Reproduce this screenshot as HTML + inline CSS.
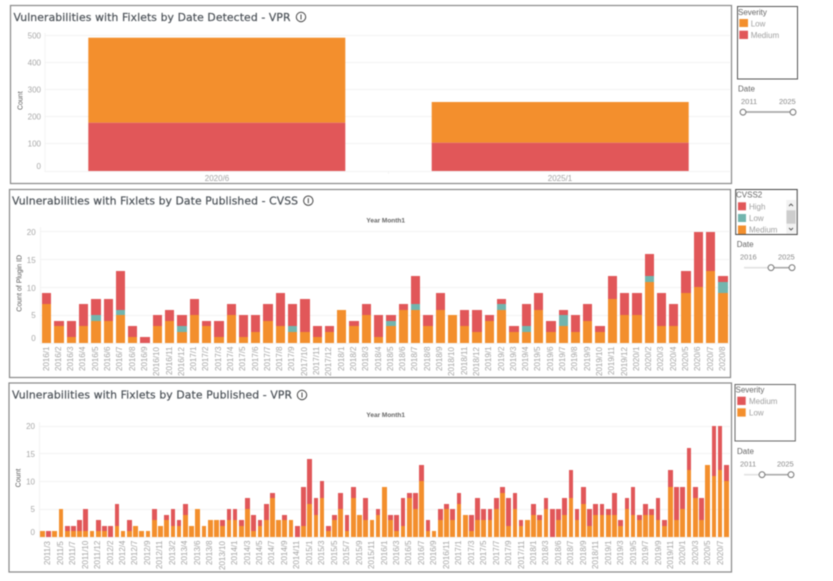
<!DOCTYPE html>
<html><head><meta charset="utf-8"><style>
html,body{margin:0;padding:0;background:#fff}
#p{position:relative;width:833px;height:581px;overflow:hidden;background:#fff;filter:blur(.45px);font-family:"Liberation Sans",sans-serif}
svg{position:absolute;left:0;top:0}
.bars{position:absolute;display:flex;align-items:flex-end}
.bars b{display:flex;flex-direction:column;flex:none}
.bars u,.bars s,.bars i{display:block}
.c2 b{width:12.31px}.c2 u,.c2 s,.c2 i{width:9.3px;margin-left:1.5px}
.c3 b{width:6.23px}.c3 u,.c3 i{width:4.7px;margin-left:.76px}
u{background:#e15759}s{background:#72b5ae}i{background:#f38f2d}
.h1{height:5.56px}.h2{height:11.12px}.h3{height:16.68px}.h4{height:22.24px}.h5{height:27.8px}.h6{height:33.36px}.h7{height:38.92px}.h8{height:44.48px}.h9{height:50.04px}.h10{height:55.6px}.h11{height:61.16px}.h12{height:66.72px}.h13{height:72.28px}
.lab{position:absolute;display:flex;color:#a3a3a3;font-size:8px}
.lab span{display:block;flex:none;height:30px;writing-mode:vertical-rl;transform:rotate(180deg);text-align:end;white-space:nowrap}
.l2 span{width:12.31px;line-height:12.31px}
.l3 span{width:12.46px;line-height:12.46px}
text{font-family:"Liberation Sans",sans-serif}
.t{font-family:"DejaVu Sans",sans-serif;font-size:10.8px;fill:#4b5157;stroke:#4b5157;stroke-width:.2px}
.ax{font-size:8px;fill:#a3a3a3}
.ar{font-size:8px;fill:#a8a8a8;text-anchor:end}
.yl{font-size:7px;fill:#555;text-anchor:middle}
.ym{font-size:6.5px;fill:#666;font-weight:bold;text-anchor:middle}
.lg{font-size:8px;fill:#666}
.li{font-size:8px;fill:#a0a0a0}
.sv{font-size:7.5px;fill:#888}
.f{fill:none;stroke:#888;stroke-width:1.2}
.g{stroke:#f3f3f3;stroke-width:1}
.h{fill:#fff;stroke:#777;stroke-width:1}
</style></head><body><div id="p">
<svg width="833" height="581" viewBox="0 0 833 581">
<rect class="f" x="10.5" y="5.5" width="721" height="178"/>
<rect class="f" x="9.5" y="189.5" width="721" height="188"/>
<rect class="f" x="9" y="383" width="722.5" height="189"/>
<g class="g">
<line x1="45" x2="731" y1="35.5" y2="35.5"/><line x1="45" x2="731" y1="62.5" y2="62.5"/><line x1="45" x2="731" y1="89.5" y2="89.5"/><line x1="45" x2="731" y1="116.5" y2="116.5"/><line x1="45" x2="731" y1="143.5" y2="143.5"/><line x1="45" x2="731" y1="171.5" y2="171.5"/>
<line x1="45" x2="45" y1="33" y2="172"/><line x1="388.5" x2="388.5" y1="171" y2="174"/>
<line x1="41" x2="730" y1="231.5" y2="231.5"/><line x1="41" x2="730" y1="259.5" y2="259.5"/><line x1="41" x2="730" y1="287.5" y2="287.5"/><line x1="41" x2="730" y1="315.5" y2="315.5"/><line x1="41" x2="730" y1="343.5" y2="343.5"/>
<line x1="40.5" x2="40.5" y1="227" y2="344"/>
<line x1="39" x2="731" y1="426.5" y2="426.5"/><line x1="39" x2="731" y1="453.5" y2="453.5"/><line x1="39" x2="731" y1="481.5" y2="481.5"/><line x1="39" x2="731" y1="509.5" y2="509.5"/><line x1="39" x2="731" y1="537.5" y2="537.5"/>
<line x1="39.5" x2="39.5" y1="422" y2="538"/>
</g>
<rect x="88.3" y="37.7" width="257" height="85" fill="#f38f2d"/>
<rect x="88.3" y="122.7" width="257" height="48.3" fill="#e15759"/>
<rect x="431.7" y="102" width="257" height="40.7" fill="#f38f2d"/>
<rect x="431.7" y="142.7" width="257" height="28.3" fill="#e15759"/>

<text class="t" x="13.5" y="21" textLength="277" lengthAdjust="spacing">Vulnerabilities with Fixlets by Date Detected - VPR</text>
<text class="t" x="12" y="204.7" textLength="286" lengthAdjust="spacing">Vulnerabilities with Fixlets by Date Published - CVSS</text>
<text class="t" x="12" y="398.7" textLength="280" lengthAdjust="spacing">Vulnerabilities with Fixlets by Date Published - VPR</text>
<g fill="none" stroke="#444" stroke-width="1">
<circle cx="301" cy="17" r="4.7"/><path d="M301 14.5v5"/>
<circle cx="308.3" cy="200.7" r="4.7"/><path d="M308.3 198.2v5"/>
<circle cx="302" cy="395" r="4.7"/><path d="M302 392.5v5"/>
</g>
<text class="ym" x="385.7" y="222.5">Year Month1</text>
<text class="ym" x="385.7" y="417">Year Month1</text>

<text class="ar" x="41" y="38.5">500</text><text class="ar" x="41" y="65.5">400</text><text class="ar" x="41" y="92.5">300</text><text class="ar" x="41" y="119.5">200</text><text class="ar" x="41" y="146.5">100</text><text class="ar" x="41" y="169">0</text>
<text class="yl" transform="translate(22.5,100.7) rotate(-90)">Count</text>
<text class="ax" x="217" y="181" text-anchor="middle">2020/6</text>
<text class="ax" x="560" y="181" text-anchor="middle">2025/1</text>

<text class="ar" x="35.7" y="235">20</text><text class="ar" x="35.7" y="263">15</text><text class="ar" x="35.7" y="291">10</text><text class="ar" x="35.7" y="318">5</text><text class="ar" x="35.7" y="341">0</text>
<text class="yl" transform="translate(21.5,283.3) rotate(-90)">Count of Plugin ID</text>

<text class="ar" x="35" y="429">20</text><text class="ar" x="35" y="457">15</text><text class="ar" x="35" y="484.5">10</text><text class="ar" x="35" y="512">5</text><text class="ar" x="35" y="535">0</text>
<text class="yl" transform="translate(20.5,478) rotate(-90)">Count</text>

<rect x="737.5" y="6.5" width="60" height="72.5" fill="none" stroke="#555" stroke-width="1"/>
<text class="lg" x="738" y="15">Severity</text>
<rect x="739.3" y="19" width="8.7" height="8" fill="#f38f2d"/><text class="li" x="750.7" y="26.5">Low</text>
<rect x="739.3" y="30.7" width="8.7" height="8.3" fill="#e15759"/><text class="li" x="750.7" y="38">Medium</text>
<text class="lg" x="738" y="91.5">Date</text>
<text class="sv" x="741" y="104">2011</text><text class="sv" x="779" y="104">2025</text>
<line x1="743" x2="793" y1="112" y2="112" stroke="#aaa" stroke-width="1.7"/>
<circle class="h" cx="743" cy="112.2" r="2.9"/><circle class="h" cx="793" cy="112.2" r="2.9"/>

<rect x="735.7" y="189.5" width="61.5" height="45" fill="none" stroke="#444" stroke-width="1"/>
<text class="lg" x="736" y="197.5">CVSS2</text>
<rect x="738" y="202.3" width="8" height="8" fill="#e15759"/><text class="li" x="749" y="209.5">High</text>
<rect x="738" y="214" width="8" height="8" fill="#72b5ae"/><text class="li" x="749" y="221">Low</text>
<rect x="738" y="225.5" width="8" height="8.5" fill="#f38f2d"/><text class="li" x="749" y="232.5">Medium</text>
<rect x="786.3" y="200" width="9.7" height="34" fill="#f2f2f2"/><rect x="786.5" y="210.3" width="9" height="13.4" fill="#cdcdcd"/>
<path d="M789 206l2-2 2 2M789 228l2 2 2-2" fill="none" stroke="#555" stroke-width=".9"/>
<text class="lg" x="736.7" y="247">Date</text>
<text class="sv" x="740" y="259.5">2016</text><text class="sv" x="778" y="259.5">2025</text>
<line x1="744" x2="771" y1="267.7" y2="267.7" stroke="#e2e2e2" stroke-width="1.7"/>
<line x1="771" x2="792" y1="267.7" y2="267.7" stroke="#aaa" stroke-width="1.7"/>
<circle class="h" cx="771" cy="267.7" r="2.9"/><circle class="h" cx="792" cy="267.7" r="2.9"/>

<rect x="735" y="384.5" width="60.3" height="56.5" fill="none" stroke="#666" stroke-width="1"/>
<text class="lg" x="735.5" y="392.5">Severity</text>
<rect x="737.3" y="396.7" width="8.4" height="8.3" fill="#e15759"/><text class="li" x="749" y="404">Medium</text>
<rect x="737.3" y="408.3" width="8.4" height="8.3" fill="#f38f2d"/><text class="li" x="749" y="415.5">Low</text>
<text class="lg" x="737" y="454">Date</text>
<text class="sv" x="740" y="466.5">2011</text><text class="sv" x="777" y="466.5">2025</text>
<line x1="744" x2="762" y1="474.7" y2="474.7" stroke="#e2e2e2" stroke-width="1.7"/>
<line x1="762" x2="791" y1="474.7" y2="474.7" stroke="#aaa" stroke-width="1.7"/>
<circle class="h" cx="762" cy="474.7" r="2.9"/><circle class="h" cx="791" cy="474.7" r="2.9"/>
</svg>

<div class="bars c2" style="left:40.55px;top:223px;height:120px">
<b><u class=h2></u><i class=h7></i></b><b><u class=h1></u><i class=h3></i></b><b><u class=h3></u><i class=h1></i></b><b><u class=h4></u><i class=h3></i></b><b><u class=h3></u><s class=h1></s><i class=h4></i></b><b><u class=h4></u><i class=h4></i></b><b><u class=h7></u><s class=h1></s><i class=h5></i></b><b><u class=h2></u><i class=h1></i></b><b><u class=h1></u></b><b><u class=h2></u><i class=h3></i></b><b><u class=h2></u><i class=h4></i></b><b><u class=h2></u><s class=h1></s><i class=h2></i></b><b><u class=h3></u><i class=h5></i></b><b><u class=h1></u><i class=h3></i></b><b><u class=h3></u><i class=h1></i></b><b><u class=h2></u><i class=h5></i></b><b><u class=h4></u><i class=h1></i></b><b><u class=h3></u><i class=h2></i></b><b><u class=h3></u><i class=h4></i></b><b><u class=h6></u><i class=h3></i></b><b><u class=h4></u><s class=h1></s><i class=h2></i></b><b><u class=h6></u><i class=h2></i></b><b><u class=h2></u><i class=h1></i></b><b><u class=h1></u><i class=h2></i></b><b><i class=h6></i></b><b><u class=h1></u><i class=h3></i></b><b><u class=h2></u><i class=h5></i></b><b><u class=h4></u><i class=h1></i></b><b><u class=h1></u><s class=h1></s><i class=h3></i></b><b><u class=h1></u><i class=h6></i></b><b><u class=h5></u><s class=h1></s><i class=h6></i></b><b><u class=h2></u><i class=h3></i></b><b><u class=h3></u><i class=h6></i></b><b><i class=h5></i></b><b><u class=h3></u><i class=h3></i></b><b><u class=h4></u><i class=h2></i></b><b><u class=h1></u><i class=h4></i></b><b><u class=h1></u><s class=h1></s><i class=h6></i></b><b><u class=h1></u><i class=h2></i></b><b><u class=h4></u><s class=h1></s><i class=h2></i></b><b><u class=h3></u><i class=h6></i></b><b><u class=h2></u><i class=h2></i></b><b><u class=h1></u><s class=h2></s><i class=h3></i></b><b><u class=h3></u><i class=h2></i></b><b><u class=h3></u><i class=h4></i></b><b><u class=h1></u><i class=h2></i></b><b><u class=h4></u><i class=h8></i></b><b><u class=h4></u><i class=h5></i></b><b><u class=h4></u><i class=h5></i></b><b><u class=h4></u><s class=h1></s><i class=h11></i></b><b><u class=h6></u><i class=h3></i></b><b><u class=h4></u><i class=h3></i></b><b><u class=h4></u><i class=h9></i></b><b><u class=h10></u><i class=h10></i></b><b><u class=h7></u><i class=h13></i></b><b><u class=h1></u><s class=h2></s><i class=h9></i></b>
</div>
<div class="lab l2" style="left:40.55px;top:346.7px">
<span>2016/1</span><span>2016/2</span><span>2016/3</span><span>2016/4</span><span>2016/5</span><span>2016/6</span><span>2016/7</span><span>2016/8</span><span>2016/9</span><span>2016/10</span><span>2016/11</span><span>2016/12</span><span>2017/1</span><span>2017/2</span><span>2017/3</span><span>2017/4</span><span>2017/5</span><span>2017/6</span><span>2017/7</span><span>2017/8</span><span>2017/9</span><span>2017/10</span><span>2017/11</span><span>2017/12</span><span>2018/1</span><span>2018/2</span><span>2018/3</span><span>2018/4</span><span>2018/5</span><span>2018/6</span><span>2018/7</span><span>2018/8</span><span>2018/9</span><span>2018/10</span><span>2018/11</span><span>2018/12</span><span>2019/1</span><span>2019/2</span><span>2019/3</span><span>2019/4</span><span>2019/5</span><span>2019/6</span><span>2019/7</span><span>2019/8</span><span>2019/9</span><span>2019/10</span><span>2019/11</span><span>2019/12</span><span>2020/1</span><span>2020/2</span><span>2020/3</span><span>2020/4</span><span>2020/5</span><span>2020/6</span><span>2020/7</span><span>2020/8</span>
</div>

<div class="bars c3" style="left:39.2px;top:417px;height:120px">
<b><i class=h1></i></b><b><u class=h1></u></b><b><i class=h1></i></b><b><i class=h5></i></b><b><u class=h1></u><i class=h1></i></b><b><u class=h1></u><i class=h1></i></b><b><u class=h2></u><i class=h1></i></b><b><u class=h4></u><i class=h1></i></b><b><i class=h1></i></b><b><u class=h2></u><i class=h1></i></b><b><u class=h1></u><i class=h1></i></b><b><u class=h2></u></b><b><u class=h4></u><i class=h2></i></b><b><i class=h1></i></b><b><u class=h2></u><i class=h1></i></b><b><i class=h2></i></b><b><i class=h1></i></b><b><i class=h1></i></b><b><u class=h2></u><i class=h3></i></b><b><i class=h2></i></b><b><u class=h1></u><i class=h3></i></b><b><u class=h3></u><i class=h2></i></b><b><u class=h1></u><i class=h2></i></b><b><u class=h2></u><i class=h4></i></b><b><i class=h2></i></b><b><i class=h5></i></b><b><i class=h2></i></b><b><i class=h3></i></b><b><i class=h3></i></b><b><u class=h1></u><i class=h2></i></b><b><u class=h2></u><i class=h3></i></b><b><u class=h2></u><i class=h3></i></b><b><u class=h1></u><i class=h2></i></b><b><u class=h2></u><i class=h5></i></b><b><u class=h3></u><i class=h1></i></b><b><u class=h1></u><i class=h2></i></b><b><u class=h3></u><i class=h3></i></b><b><u class=h1></u><i class=h7></i></b><b><i class=h3></i></b><b><u class=h1></u><i class=h3></i></b><b><i class=h3></i></b><b><u class=h2></u></b><b><u class=h7></u><i class=h2></i></b><b><u class=h8></u><i class=h6></i></b><b><u class=h3></u><i class=h4></i></b><b><u class=h3></u><i class=h7></i></b><b><u class=h1></u><i class=h1></i></b><b><u class=h1></u><i class=h3></i></b><b><u class=h3></u><i class=h5></i></b><b><u class=h3></u><i class=h1></i></b><b><u class=h2></u><i class=h7></i></b><b><i class=h4></i></b><b><u class=h4></u><i class=h3></i></b><b><i class=h3></i></b><b><u class=h1></u><i class=h4></i></b><b><i class=h9></i></b><b><u class=h1></u><i class=h3></i></b><b><u class=h3></u><i class=h1></i></b><b><u class=h5></u><i class=h2></i></b><b><u class=h1></u><i class=h7></i></b><b><u class=h3></u><i class=h5></i></b><b><u class=h3></u><i class=h10></i></b><b><u class=h2></u><i class=h1></i></b><b><i class=h1></i></b><b><u class=h2></u><i class=h3></i></b><b><u class=h1></u><i class=h5></i></b><b><u class=h2></u><i class=h3></i></b><b><u class=h2></u><i class=h6></i></b><b><i class=h4></i></b><b><u class=h3></u><i class=h1></i></b><b><u class=h4></u><i class=h3></i></b><b><u class=h2></u><i class=h3></i></b><b><u class=h2></u><i class=h3></i></b><b><u class=h2></u><i class=h5></i></b><b><u class=h1></u><i class=h8></i></b><b><u class=h5></u><i class=h2></i></b><b><u class=h3></u><i class=h5></i></b><b><u class=h1></u><i class=h2></i></b><b><i class=h3></i></b><b><u class=h2></u><i class=h4></i></b><b><u class=h1></u><i class=h3></i></b><b><u class=h2></u><i class=h5></i></b><b><u class=h5></u></b><b><u class=h2></u><i class=h3></i></b><b><u class=h3></u><i class=h4></i></b><b><u class=h5></u><i class=h7></i></b><b><u class=h2></u><i class=h3></i></b><b><u class=h3></u><i class=h6></i></b><b><u class=h3></u><i class=h2></i></b><b><u class=h2></u><i class=h4></i></b><b><u class=h2></u><i class=h4></i></b><b><u class=h1></u><i class=h4></i></b><b><u class=h4></u><i class=h4></i></b><b><u class=h1></u><i class=h2></i></b><b><u class=h2></u><i class=h5></i></b><b><u class=h5></u><i class=h4></i></b><b><u class=h1></u><i class=h3></i></b><b><u class=h2></u><i class=h4></i></b><b><u class=h1></u><i class=h4></i></b><b><u class=h4></u><i class=h3></i></b><b><u class=h1></u><i class=h2></i></b><b><u class=h3></u><i class=h9></i></b><b><u class=h6></u><i class=h3></i></b><b><u class=h4></u><i class=h5></i></b><b><u class=h4></u><i class=h12></i></b><b><u class=h2></u><i class=h7></i></b><b><u class=h4></u><i class=h3></i></b><b><i class=h13></i></b><b><u class=h9></u><i class=h11></i></b><b><u class=h8></u><i class=h12></i></b><b><u class=h3></u><i class=h10></i></b>
</div>
<div class="lab l3" style="left:42.3px;top:541.3px">
<span>2011/3</span><span>2011/5</span><span>2011/7</span><span>2011/10</span><span>2011/12</span><span>2012/2</span><span>2012/4</span><span>2012/7</span><span>2012/9</span><span>2012/11</span><span>2013/2</span><span>2013/4</span><span>2013/6</span><span>2013/8</span><span>2013/10</span><span>2014/1</span><span>2014/3</span><span>2014/5</span><span>2014/7</span><span>2014/9</span><span>2014/11</span><span>2015/1</span><span>2015/3</span><span>2015/5</span><span>2015/7</span><span>2015/9</span><span>2015/11</span><span>2016/1</span><span>2016/3</span><span>2016/5</span><span>2016/7</span><span>2016/9</span><span>2016/11</span><span>2017/1</span><span>2017/3</span><span>2017/5</span><span>2017/7</span><span>2017/9</span><span>2017/11</span><span>2018/1</span><span>2018/3</span><span>2018/6</span><span>2018/7</span><span>2018/9</span><span>2018/11</span><span>2019/1</span><span>2019/3</span><span>2019/5</span><span>2019/7</span><span>2019/9</span><span>2019/11</span><span>2020/1</span><span>2020/3</span><span>2020/5</span><span>2020/7</span>
</div>
</div></body></html>
